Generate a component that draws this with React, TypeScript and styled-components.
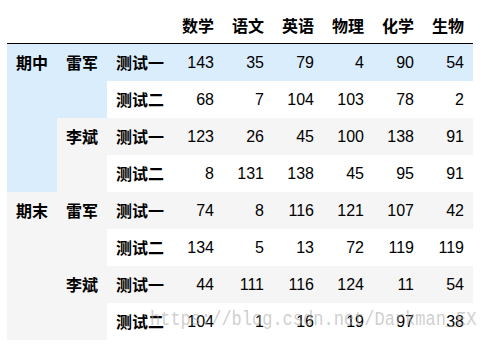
import React from 'react';
import styled, { createGlobalStyle } from 'styled-components';

const GlobalStyle = createGlobalStyle`
  html, body {
    margin: 0;
    padding: 0;
    background: #ffffff;
  }
  body {
    font-family: 'Liberation Sans', Arial, 'Noto Sans CJK SC', sans-serif;
    color: #000000;
  }
`;

const SUBJECTS = ['数学', '语文', '英语', '物理', '化学', '生物'];

const ROWS = [
  { term: '期中', name: '雷军', test: '测试一', scores: [143, 35, 79, 4, 90, 54] },
  { term: '', name: '', test: '测试二', scores: [68, 7, 104, 103, 78, 2] },
  { term: '', name: '李斌', test: '测试一', scores: [123, 26, 45, 100, 138, 91] },
  { term: '', name: '', test: '测试二', scores: [8, 131, 138, 45, 95, 91] },
  { term: '期末', name: '雷军', test: '测试一', scores: [74, 8, 116, 121, 107, 42] },
  { term: '', name: '', test: '测试二', scores: [134, 5, 13, 72, 119, 119] },
  { term: '', name: '李斌', test: '测试一', scores: [44, 111, 116, 124, 11, 54] },
  { term: '', name: '', test: '测试二', scores: [104, 1, 16, 19, 97, 38] },
];

const HOVER = '#d9edfd';
const STRIPE = '#f5f5f5';

const Page = styled.div`
  position: relative;
  padding-left: 7px;
  width: 483px;
  height: 345px;
  box-sizing: border-box;
  overflow: hidden;
`;

const Table = styled.table`
  border-collapse: collapse;
  border-spacing: 0;
  table-layout: fixed;
  width: 466px;
  font-size: 16px;
  line-height: 19px;
`;

const HeadRow = styled.tr`
  height: 43px;
  border-bottom: 1px solid #000000;
`;

const HeadCell = styled.th<{ $w: number }>`
  width: ${p => p.$w}px;
  padding: 0 9px 8px 0;
  box-sizing: border-box;
  vertical-align: bottom;
  text-align: right;
  font-family: 'Noto Sans CJK SC', sans-serif;
  font-weight: 700;
  white-space: nowrap;
`;

const BodyRow = styled.tr<{ $bg: string }>`
  height: 37px;
  background: ${p => p.$bg};
`;

const IndexCell = styled.th<{ $bg: string }>`
  padding: 9px 0 9px 9px;
  text-align: left;
  vertical-align: top;
  font-family: 'Noto Sans CJK SC', sans-serif;
  font-weight: 700;
  white-space: nowrap;
  background: ${p => p.$bg};
`;

const DataCell = styled.td`
  padding: 9px 9px 9px 0;
  text-align: right;
  vertical-align: middle;
  font-family: 'Liberation Sans', Arial, sans-serif;
`;

// the blog's watermark lies over the last row of the table
const Watermark = styled.div`
  position: absolute;
  left: 150px;
  top: 309px;
  font-family: 'Liberation Mono', 'Courier New', monospace;
  font-size: 20px;
  line-height: 22px;
  color: rgba(165, 165, 165, 0.55);
  white-space: nowrap;
  transform: scaleX(0.85);
  transform-origin: left top;
  pointer-events: none;
`;

function rowColor(i: number) {
  if (i === 0) return HOVER;
  return i % 2 === 0 ? STRIPE : '#ffffff';
}

export default function App() {
  return (
    <Page>
      <GlobalStyle />
      <Table>
        <thead>
          <HeadRow>
            <HeadCell $w={50} />
            <HeadCell $w={50} />
            <HeadCell $w={66} />
            {SUBJECTS.map(s => (
              <HeadCell key={s} $w={50}>
                {s}
              </HeadCell>
            ))}
          </HeadRow>
        </thead>
        <tbody>
          {ROWS.map((row, i) => {
            const bg = rowColor(i);
            return (
              <BodyRow key={i} $bg={bg}>
                {row.term && (
                  <IndexCell rowSpan={4} $bg={bg}>
                    {row.term}
                  </IndexCell>
                )}
                {row.name && (
                  <IndexCell rowSpan={2} $bg={bg}>
                    {row.name}
                  </IndexCell>
                )}
                <IndexCell $bg={bg}>{row.test}</IndexCell>
                {row.scores.map((v, j) => (
                  <DataCell key={j}>{v}</DataCell>
                ))}
              </BodyRow>
            );
          })}
        </tbody>
      </Table>
      <Watermark>https://blog.csdn.net/Darkman_EX</Watermark>
    </Page>
  );
}
